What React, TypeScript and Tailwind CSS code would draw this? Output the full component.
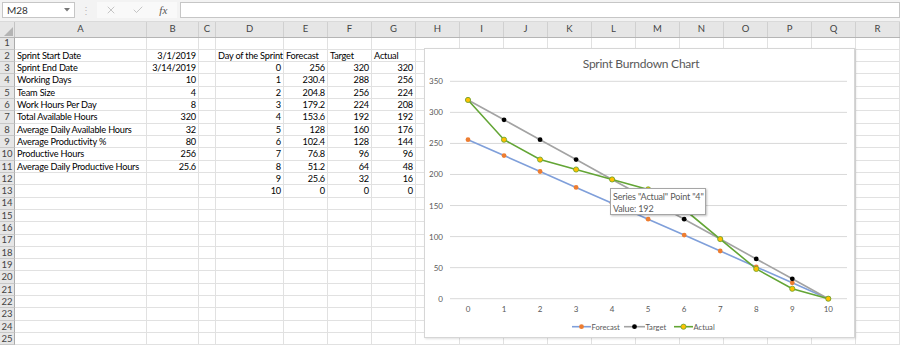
import React from 'react';
import { X, Check } from 'lucide-react';

const COLS = ['A', 'B', 'C', 'D', 'E', 'F', 'G', 'H', 'I', 'J', 'K', 'L', 'M', 'N', 'O', 'P', 'Q', 'R'];

type Cell = { t: string; r?: boolean };

// sheet contents, keyed by row number -> column letter
const sheet: Record<number, Record<string, Cell>> = {
  2: { A: { t: 'Sprint Start Date' }, B: { t: '3/1/2019', r: true }, D: { t: 'Day of the Sprint' }, E: { t: 'Forecast' }, F: { t: 'Target' }, G: { t: 'Actual' } },
};

const leftInfo: [string, string][] = [
  ['Sprint End Date', '3/14/2019'],
  ['Working Days', '10'],
  ['Team Size', '4'],
  ['Work Hours Per Day', '8'],
  ['Total Available Hours', '320'],
  ['Average Daily Available Hours', '32'],
  ['Average Productivity %', '80'],
  ['Productive Hours', '256'],
  ['Average Daily Productive Hours', '25.6'],
];

const forecast = [256, 230.4, 204.8, 179.2, 153.6, 128, 102.4, 76.8, 51.2, 25.6, 0];
const target = [320, 288, 256, 224, 192, 160, 128, 96, 64, 32, 0];
const actual = [320, 256, 224, 208, 192, 176, 144, 96, 48, 16, 0];

for (let i = 0; i <= 10; i++) {
  const row = i + 3;
  sheet[row] = sheet[row] || {};
  if (leftInfo[i]) {
    sheet[row].A = { t: leftInfo[i][0] };
    sheet[row].B = { t: leftInfo[i][1], r: true };
  }
  sheet[row].D = { t: String(i), r: true };
  sheet[row].E = { t: String(forecast[i]), r: true };
  sheet[row].F = { t: String(target[i]), r: true };
  sheet[row].G = { t: String(actual[i]), r: true };
}

const gridCols = 'grid grid-cols-[15px_132px_52px_17px_68px_repeat(14,44px)]';

const FormulaBar = () => (
  <div className="h-[22px] bg-[#f3f3f3] flex items-start pt-[2px] shrink-0 border-b border-[#dadada]">
    <div className="ml-[2px] w-[73px] h-[16px] bg-white border border-[#c6c6c6] flex items-center justify-between px-[4px]">
      <span className="text-[10px] text-[#333]">M28</span>
      <svg width="6" height="4" viewBox="0 0 6 4"><path d="M0 0h6L3 3.5z" fill="#777" /></svg>
    </div>
    <div className="w-[22px] h-[16px] flex items-center justify-center text-[#b8b8b8] text-[10px]">⋮</div>
    <div className="w-[80px] h-[16px] bg-[#f9f9f9] flex items-center justify-around pr-[2px]">
      <X size={12} strokeWidth={1.3} color="#a8a8a8" />
      <Check size={12} strokeWidth={1.3} color="#a8a8a8" />
      <span className="text-[11px] italic text-[#555] font-['Liberation_Serif',serif]">fx</span>
    </div>
    <div className="ml-[3px] flex-1 h-[16px] bg-white border border-[#c6c6c6]" />
  </div>
);

const HeaderRow = () => (
  <div className={`${gridCols} h-[15.5px] bg-[#e6e6e6] border-b border-[#b5b5b5]`}>
    <div className="relative border-r border-[#c4c4c4]">
      <svg className="absolute right-[1px] bottom-[1px]" width="9" height="9" viewBox="0 0 9 9"><path d="M9 0v9H0z" fill="#b4b4b4" /></svg>
    </div>
    {COLS.map((c) => (
      <div key={c} className="flex items-center justify-center text-[9.5px] text-[#444] border-r border-[#d0d0d0]">{c}</div>
    ))}
  </div>
);

const SheetRow = ({ n }: { n: number }) => {
  const data = sheet[n] || {};
  return (
    <div className={`${gridCols} h-[12.32px]`}>
      <div className="bg-[#e6e6e6] border-r border-b border-[#c8c8c8] border-r-[#ababab] flex items-center justify-center text-[9.5px] text-[#444] leading-none">{n}</div>
      {COLS.map((c) => {
        const cell = data[c];
        return (
          <div key={c} className="border-r border-b border-[#e1e1e1] flex items-center leading-none text-[9.2px] tracking-[-0.2px] text-black whitespace-nowrap overflow-visible">
            {cell && (
              <span className={`w-full px-[2px] ${cell.r ? 'text-right' : 'text-left'}`}>{cell.t}</span>
            )}
          </div>
        );
      })}
    </div>
  );
};

// chart geometry, relative to the chart box
const px = (i: number) => 43 + 36.03 * i;
const py = (v: number) => 249.7 - 0.6211 * v;
const pts = (vals: number[]) => vals.map((v, i) => `${px(i)},${py(v)}`).join(' ');

const BurndownChart = () => (
  <div className="absolute left-[424px] top-[48px] w-[431px] h-[290px] bg-white border border-[#d6d6d6] shadow-[1px_1px_2px_rgba(0,0,0,0.12)]">
    <svg width="431" height="290" className="font-['Lato',sans-serif]">
      <text x="216" y="18.5" textAnchor="middle" fontSize="12" letterSpacing="-0.25" fill="#595959">Sprint Burndown Chart</text>
      {[0, 50, 100, 150, 200, 250, 300, 350].map((v) => (
        <g key={v}>
          <line x1="25" x2="422" y1={py(v)} y2={py(v)} stroke="#d9d9d9" strokeWidth="1" />
          <text x="18" y={py(v) + 3} textAnchor="end" fontSize="8" fill="#595959">{v}</text>
        </g>
      ))}
      {Array.from({ length: 11 }, (_, i) => (
        <text key={i} x={px(i)} y="262.5" textAnchor="middle" fontSize="8" fill="#595959">{i}</text>
      ))}
      <polyline points={pts(forecast)} fill="none" stroke="#7f9fda" strokeWidth="1.6" />
      <polyline points={pts(target)} fill="none" stroke="#a3a3a3" strokeWidth="1.6" />
      <polyline points={pts(actual)} fill="none" stroke="#63a535" strokeWidth="1.6" />
      {forecast.map((v, i) => <circle key={`f${i}`} cx={px(i)} cy={py(v)} r="2.4" fill="#ed7d31" />)}
      {target.map((v, i) => <circle key={`t${i}`} cx={px(i)} cy={py(v)} r="2.4" fill="#000" />)}
      {actual.map((v, i) => <circle key={`a${i}`} cx={px(i)} cy={py(v)} r="2.6" fill="#ffc000" stroke="#63a535" strokeWidth="0.8" />)}
      {/* legend */}
      <g fontSize="7.6" fill="#595959">
        <line x1="147" x2="166" y1="277.7" y2="277.7" stroke="#7f9fda" strokeWidth="1.6" />
        <circle cx="156.5" cy="277.7" r="2.4" fill="#ed7d31" />
        <text x="166.5" y="280.5">Forecast</text>
        <line x1="199" x2="220" y1="277.7" y2="277.7" stroke="#a3a3a3" strokeWidth="1.6" />
        <circle cx="209.5" cy="277.7" r="2.4" fill="#000" />
        <text x="220.5" y="280.5">Target</text>
        <line x1="249" x2="268" y1="277.7" y2="277.7" stroke="#63a535" strokeWidth="1.6" />
        <circle cx="258.5" cy="277.7" r="2.6" fill="#ffc000" stroke="#63a535" strokeWidth="0.8" />
        <text x="268.5" y="280.5">Actual</text>
      </g>
    </svg>
  </div>
);

const Tooltip = () => (
  <div className="absolute left-[610px] top-[188px] w-[96px] h-[27px] bg-white border border-[#a6a6a6] shadow-[1px_1px_2px_rgba(0,0,0,0.25)] px-[2px] pt-[1.5px] font-['Lato',sans-serif] text-[9px] tracking-[-0.15px] leading-[12px] text-[#595959] whitespace-nowrap">
    <div>Series "Actual" Point "4"</div>
    <div>Value: 192</div>
  </div>
);

export default function App() {
  return (
    <div className="relative w-[900px] h-[346px] overflow-hidden bg-white font-['Lato',sans-serif] flex flex-col">
      <FormulaBar />
      <HeaderRow />
      <div className="flex flex-col">
        {Array.from({ length: 25 }, (_, i) => <SheetRow key={i} n={i + 1} />)}
      </div>
      <BurndownChart />
      <Tooltip />
    </div>
  );
}
